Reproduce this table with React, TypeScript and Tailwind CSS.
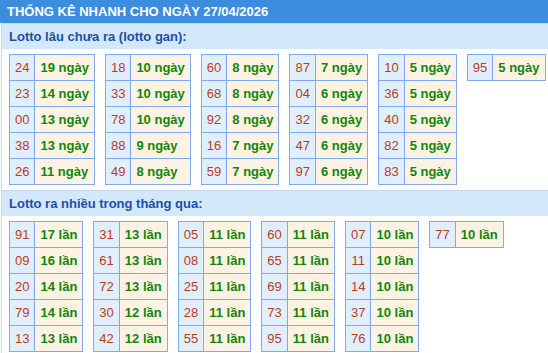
import React from "react";

type Row = [string, number];

const ganTables: Row[][] = [
  [["24", 19], ["23", 14], ["00", 13], ["38", 13], ["26", 11]],
  [["18", 10], ["33", 10], ["78", 10], ["88", 9], ["49", 8]],
  [["60", 8], ["68", 8], ["92", 8], ["16", 7], ["59", 7]],
  [["87", 7], ["04", 6], ["32", 6], ["47", 6], ["97", 6]],
  [["10", 5], ["36", 5], ["40", 5], ["82", 5], ["83", 5]],
  [["95", 5]],
];

const nhieuTables: Row[][] = [
  [["91", 17], ["09", 16], ["20", 14], ["79", 14], ["13", 13]],
  [["31", 13], ["61", 13], ["72", 13], ["30", 12], ["42", 12]],
  [["05", 11], ["08", 11], ["25", 11], ["28", 11], ["55", 11]],
  [["60", 11], ["65", 11], ["69", 11], ["73", 11], ["95", 11]],
  [["07", 10], ["11", 10], ["14", 10], ["37", 10], ["76", 10]],
  [["77", 10]],
];

const LottoTable = ({ rows, unit }: { rows: Row[]; unit: string }) => (
  <table className="border-collapse border border-[#80a9f5] self-start">
    <tbody>
      {rows.map(([num, count]) => (
        <tr key={num} className="h-[26px]">
          <td className="border border-[#80a9f5] bg-[#e1eefd] px-[5px] text-[13px] text-[#b63f1c] text-center leading-none">
            {num}
          </td>
          <td className="border border-[#80a9f5] bg-[#fef3e2] px-[5px] text-[13px] font-bold text-[#12850f] leading-none whitespace-nowrap">
            {count} {unit}
          </td>
        </tr>
      ))}
    </tbody>
  </table>
);

const SectionTitle = ({ children }: { children: React.ReactNode }) => (
  <div className="h-[26px] flex items-center px-[7px] bg-[#d4e8fb] border-t border-[#c2d9f2] text-[13px] font-bold text-[#1c4fa6]">
    {children}
  </div>
);

export default function App() {
  return (
    <div className="w-[548px] h-[353px] bg-white overflow-hidden font-['Liberation_Sans',Arial,sans-serif]">
      <div className="h-[23px] bg-[#3a8ddf] flex items-center px-[7px] text-white text-[13px] font-bold">
        THỐNG KÊ NHANH CHO NGÀY 27/04/2026
      </div>
      <div className="border-l border-[#c6dbf3] ml-px">
        <SectionTitle>Lotto lâu chưa ra (lotto gan):</SectionTitle>
        <div className="flex flex-wrap gap-[10px] pl-[7px] pt-[5px] pb-[5px]">
          {ganTables.map((rows, i) => (
            <LottoTable key={i} rows={rows} unit="ngày" />
          ))}
        </div>
        <SectionTitle>Lotto ra nhiều trong tháng qua:</SectionTitle>
        <div className="flex flex-wrap gap-[10px] pl-[7px] pt-[5px] pb-[5px]">
          {nhieuTables.map((rows, i) => (
            <LottoTable key={i} rows={rows} unit="lần" />
          ))}
        </div>
      </div>
    </div>
  );
}
